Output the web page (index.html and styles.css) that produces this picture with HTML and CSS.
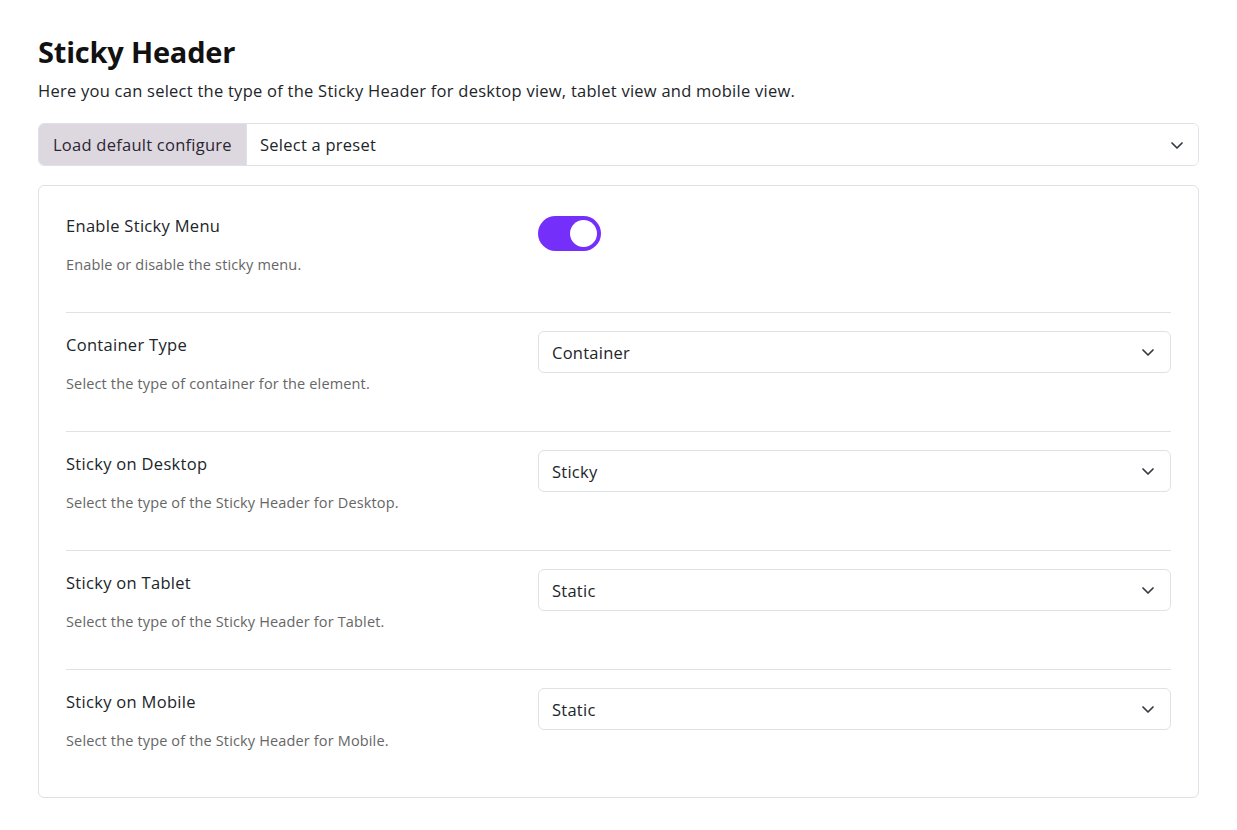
FILE: index.html
```html
<!DOCTYPE html>
<html lang="en">
<head>
<meta charset="utf-8">
<title>Sticky Header</title>
<link rel="stylesheet" href="styles.css">
</head>
<body>
<main class="page">
  <h1 class="title">Sticky Header</h1>
  <p class="lead">Here you can select the type of the Sticky Header for desktop view, tablet view and mobile view.</p>

  <div class="input-group">
    <span class="addon">Load default configure</span>
    <div class="select select-flat">
      <span>Select a preset</span>
      <svg class="chev" viewBox="0 0 16 16" width="16" height="16"><path d="M3 6l5 5 5-5" fill="none" stroke="#343a40" stroke-width="1.7" stroke-linecap="round" stroke-linejoin="round"/></svg>
    </div>
  </div>

  <section class="card">
    <div class="row">
      <div class="info">
        <div class="label">Enable Sticky Menu</div>
        <div class="desc">Enable or disable the sticky menu.</div>
      </div>
      <div class="control">
        <span class="toggle"><span class="knob"></span></span>
      </div>
    </div>

    <div class="row">
      <div class="info">
        <div class="label">Container Type</div>
        <div class="desc">Select the type of container for the element.</div>
      </div>
      <div class="control">
        <div class="select">
          <span>Container</span>
          <svg class="chev" viewBox="0 0 16 16" width="16" height="16"><path d="M3 6l5 5 5-5" fill="none" stroke="#343a40" stroke-width="1.7" stroke-linecap="round" stroke-linejoin="round"/></svg>
        </div>
      </div>
    </div>

    <div class="row">
      <div class="info">
        <div class="label">Sticky on Desktop</div>
        <div class="desc">Select the type of the Sticky Header for Desktop.</div>
      </div>
      <div class="control">
        <div class="select">
          <span>Sticky</span>
          <svg class="chev" viewBox="0 0 16 16" width="16" height="16"><path d="M3 6l5 5 5-5" fill="none" stroke="#343a40" stroke-width="1.7" stroke-linecap="round" stroke-linejoin="round"/></svg>
        </div>
      </div>
    </div>

    <div class="row">
      <div class="info">
        <div class="label">Sticky on Tablet</div>
        <div class="desc">Select the type of the Sticky Header for Tablet.</div>
      </div>
      <div class="control">
        <div class="select">
          <span>Static</span>
          <svg class="chev" viewBox="0 0 16 16" width="16" height="16"><path d="M3 6l5 5 5-5" fill="none" stroke="#343a40" stroke-width="1.7" stroke-linecap="round" stroke-linejoin="round"/></svg>
        </div>
      </div>
    </div>

    <div class="row">
      <div class="info">
        <div class="label">Sticky on Mobile</div>
        <div class="desc">Select the type of the Sticky Header for Mobile.</div>
      </div>
      <div class="control">
        <div class="select">
          <span>Static</span>
          <svg class="chev" viewBox="0 0 16 16" width="16" height="16"><path d="M3 6l5 5 5-5" fill="none" stroke="#343a40" stroke-width="1.7" stroke-linecap="round" stroke-linejoin="round"/></svg>
        </div>
      </div>
    </div>
  </section>
</main>
</body>
</html>
```

FILE: styles.css
```css
* { box-sizing: border-box; }

html, body {
  margin: 0;
  background: #ffffff;
}

body {
  font-family: "Open Sans", "Noto Sans", "Liberation Sans", sans-serif;
  color: #212529;
}

.page {
  padding: 34px 38px 32px 38px;
}

.title {
  margin: 0;
  font-size: 29px;
  line-height: 36px;
  font-weight: 700;
  color: #111111;
  letter-spacing: -0.2px;
}

.lead {
  margin: 9px 0 0 0;
  font-size: 16.5px;
  line-height: 24px;
  color: #212529;
  letter-spacing: 0.25px;
}

.input-group {
  display: flex;
  margin-top: 20px;
  height: 43px;
  border: 1px solid #dee2e6;
  border-radius: 6px;
  overflow: hidden;
}

.addon {
  display: flex;
  align-items: center;
  padding: 0 14px;
  width: 208px;
  background: #ddd8df;
  color: #2b2533;
  font-size: 16.5px;
  letter-spacing: 0.25px;
  border-right: 1px solid #dee2e6;
}

.select {
  display: flex;
  align-items: center;
  justify-content: space-between;
  height: 42px;
  padding: 0 14px 0 13px;
  border: 1px solid #dee2e6;
  border-radius: 6px;
  background: #ffffff;
  font-size: 16.5px;
  color: #212529;
  letter-spacing: 0.25px;
}

.select-flat {
  flex: 1;
  height: 41px;
  border: 0;
  border-radius: 0;
  padding-right: 13px;
}

.chev { display: block; }

.card {
  margin-top: 19px;
  border: 1px solid #dee2e6;
  border-radius: 6px;
  padding: 8px 27px 9px 27px;
}

.row {
  display: grid;
  grid-template-columns: 472px 1fr;
  padding: 18px 0 37px 0;
  border-top: 1px solid #dee2e6;
}

.row:first-child {
  border-top: 0;
}

.label {
  font-size: 16.5px;
  line-height: 28px;
  color: #212529;
  letter-spacing: 0.3px;
}

.desc {
  margin-top: 14px;
  font-size: 14.5px;
  line-height: 21px;
  color: #666666;
  letter-spacing: 0.15px;
}

.toggle {
  display: flex;
  align-items: center;
  justify-content: flex-end;
  width: 63px;
  height: 35px;
  margin-top: 4px;
  padding: 0 4px;
  border-radius: 18px;
  background: #7430fa;
}

.knob {
  width: 27px;
  height: 27px;
  border-radius: 50%;
  background: #ffffff;
}
```
